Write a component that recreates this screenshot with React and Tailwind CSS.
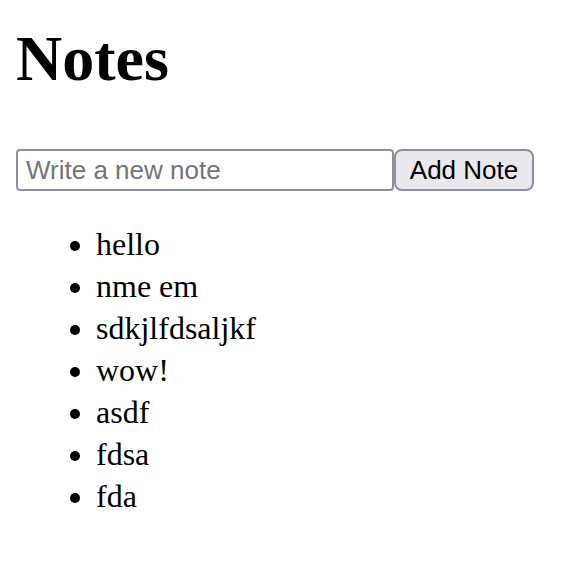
export default function App() {
    return (
        <div className="min-h-screen bg-white px-4 pt-[22px] text-black font-['Liberation_Serif',serif]">
            {/* Title */}
            <h1 className="text-[64px] font-bold leading-[74px] mb-[53px]">Notes</h1>

            {/* Form */}
            <div className="flex items-stretch">
                <input
                    type="text"
                    placeholder="Write a new note"
                    className="w-[378px] h-[42px] border-2 border-[#8f8f9d] rounded-[4px] px-[8px] bg-white text-[26px] font-['Liberation_Sans',Arial,sans-serif] placeholder:text-[#757575] outline-none"
                />
                <button className="w-[140px] h-[42px] border-2 border-[#8f8f9d] rounded-[8px] bg-[#e9e9ed] text-[26px] text-black font-['Liberation_Sans',Arial,sans-serif] leading-none">
                    Add Note
                </button>
            </div>

            {/* Notes list */}
            <ul className="list-disc mt-[32px] pl-[80px] text-[32px] leading-[42px]">
                <li>hello</li>
                <li>nme em</li>
                <li>sdkjlfdsaljkf</li>
                <li>wow!</li>
                <li>asdf</li>
                <li>fdsa</li>
                <li>fda</li>
            </ul>
        </div>
    );
}
